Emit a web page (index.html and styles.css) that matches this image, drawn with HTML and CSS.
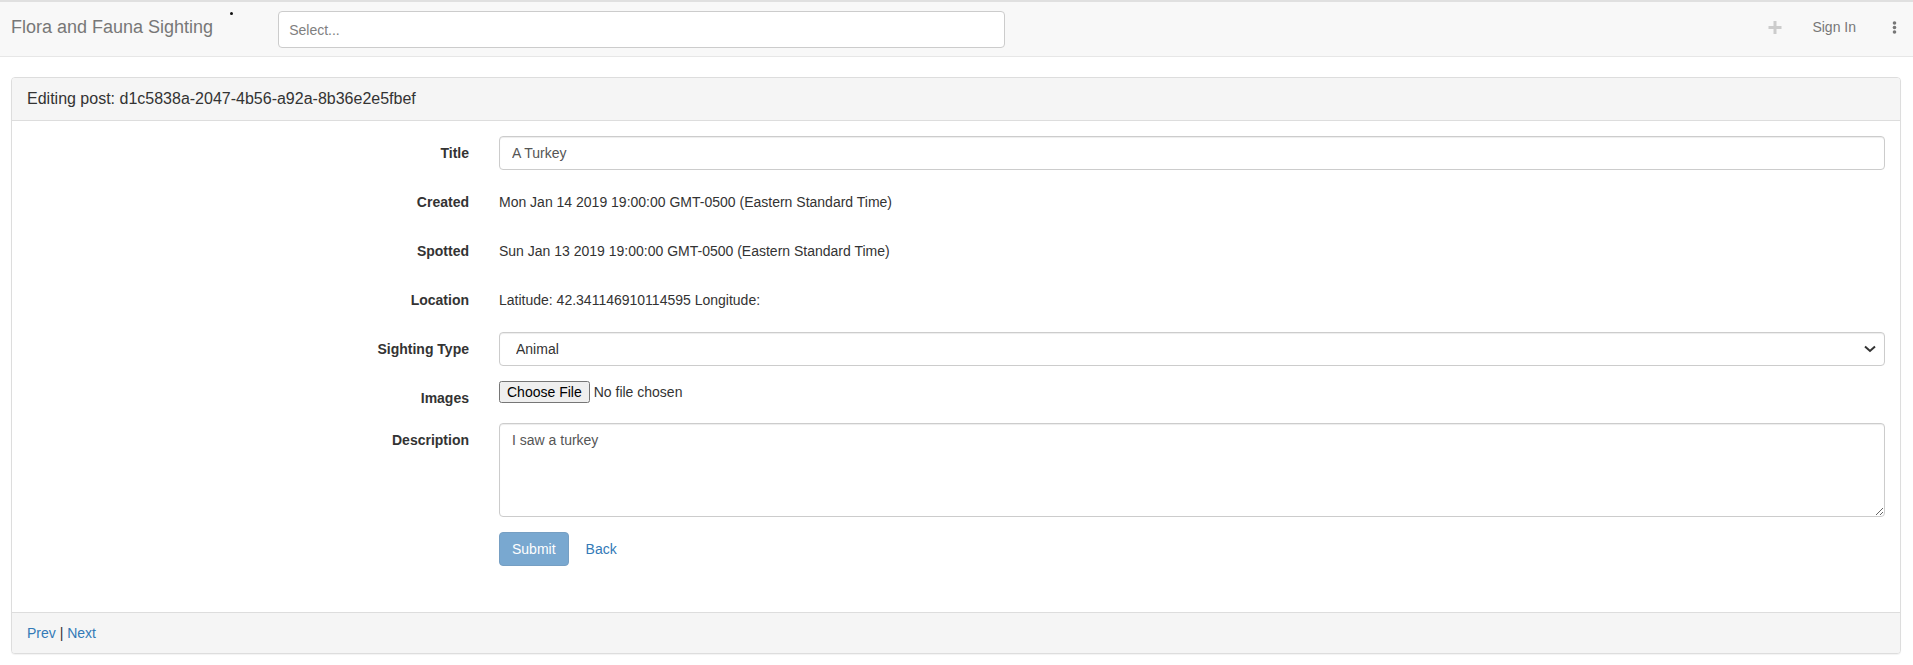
FILE: index.html
```html
<!DOCTYPE html>
<html lang="en">
<head>
<meta charset="utf-8">
<title>Flora and Fauna Sighting</title>
<link rel="stylesheet" href="styles.css">
</head>
<body>
<nav class="navbar">
  <a class="brand" href="#">Flora and Fauna Sighting</a>
  <span class="stray-dot"></span>
  <div class="search">
    <span class="search-placeholder">Select...</span>
  </div>
  <div class="nav-right">
    <svg class="plus" width="14" height="13" viewBox="0 0 14 13"><path d="M7 0V13M0.5 6.5H13.5" stroke="#cccccc" stroke-width="3" fill="none"/></svg>
    <a class="signin" href="#">Sign In</a>
    <svg class="kebab" width="5" height="13" viewBox="0 0 5 13"><circle cx="2.5" cy="2" r="1.8" fill="#777"/><circle cx="2.5" cy="6.5" r="1.8" fill="#777"/><circle cx="2.5" cy="11" r="1.8" fill="#777"/></svg>
  </div>
</nav>

<div class="panel">
  <div class="panel-heading">
    <h3 class="panel-title">Editing post: d1c5838a-2047-4b56-a92a-8b36e2e5fbef</h3>
  </div>
  <div class="panel-body">
    <form class="form">
      <div class="form-row">
        <label class="form-label" for="title">Title</label>
        <div class="form-cell"><input class="form-control" id="title" type="text" value="A Turkey"></div>
      </div>
      <div class="form-row">
        <label class="form-label">Created</label>
        <div class="form-cell"><p class="static">Mon Jan 14 2019 19:00:00 GMT-0500 (Eastern Standard Time)</p></div>
      </div>
      <div class="form-row">
        <label class="form-label">Spotted</label>
        <div class="form-cell"><p class="static">Sun Jan 13 2019 19:00:00 GMT-0500 (Eastern Standard Time)</p></div>
      </div>
      <div class="form-row">
        <label class="form-label">Location</label>
        <div class="form-cell"><p class="static">Latitude: 42.341146910114595 Longitude:</p></div>
      </div>
      <div class="form-row">
        <label class="form-label" for="type">Sighting Type</label>
        <div class="form-cell">
          <div class="select-wrap">
            <select class="form-control select" id="type">
              <option>Animal</option>
              <option>Plant</option>
            </select>
            <svg class="chevron" width="12" height="8" viewBox="0 0 12 8"><path d="M1 1.5L6 6L11 1.5" stroke="#333" stroke-width="2" fill="none"/></svg>
          </div>
        </div>
      </div>
      <div class="form-row">
        <label class="form-label" for="images">Images</label>
        <div class="form-cell"><input class="file" id="images" type="file"></div>
      </div>
      <div class="form-row">
        <label class="form-label" for="desc">Description</label>
        <div class="form-cell"><textarea class="form-control textarea" id="desc">I saw a turkey</textarea></div>
      </div>
      <div class="form-row">
        <span class="form-label"></span>
        <div class="form-cell actions">
          <button class="btn btn-primary" type="button" disabled>Submit</button>
          <a class="btn btn-link" href="#">Back</a>
        </div>
      </div>
    </form>
  </div>
  <div class="panel-footer">
    <a href="#">Prev</a> | <a href="#">Next</a>
  </div>
</div>
</body>
</html>
```

FILE: styles.css
```css
* { box-sizing: border-box; }

html, body {
  margin: 0;
  padding: 0;
  background: #fff;
}

body {
  font-family: "Liberation Sans", Arial, Helvetica, sans-serif;
  font-size: 14px;
  line-height: 20px;
  color: #333;
}

a { color: #337ab7; text-decoration: none; }

/* Navbar */
.navbar {
  display: flex;
  align-items: flex-start;
  height: 57px;
  background: #f8f8f8;
  border-top: 2px solid #e0e0e0;
  border-bottom: 1px solid #e7e7e7;
}

.brand {
  margin-top: 15px;
  padding-left: 11px;
  font-size: 18px;
  line-height: 20px;
  color: #777;
  white-space: nowrap;
}

.stray-dot {
  width: 3px;
  height: 3px;
  margin-top: 10px;
  margin-left: 17px;
  border-radius: 50%;
  background: #111;
  flex: none;
}

.search {
  display: flex;
  align-items: center;
  width: 727px;
  height: 37px;
  margin-top: 9px;
  margin-left: 45px;
  padding: 0 10px;
  background: #fff;
  border: 1px solid #ccc;
  border-radius: 4px;
  flex: none;
}

.search-placeholder {
  color: #808080;
  font-size: 14px;
}

.nav-right {
  display: flex;
  align-items: flex-start;
  margin-left: auto;
  padding-right: 16px;
}

.plus {
  margin-top: 19px;
  display: block;
}

.signin {
  margin-top: 15px;
  margin-left: 30px;
  color: #777;
}

.kebab {
  display: block;
  margin-top: 19px;
  margin-left: 36px;
}

/* Panel */
.panel {
  margin: 20px 12px 20px 11px;
  background: #fff;
  border: 1px solid #ddd;
  border-radius: 4px;
  box-shadow: 0 1px 1px rgba(0, 0, 0, .05);
}

.panel-heading {
  padding: 10px 15px;
  background: #f5f5f5;
  border-bottom: 1px solid #ddd;
  border-radius: 3px 3px 0 0;
}

.panel-title {
  margin: 0;
  font-size: 16px;
  font-weight: normal;
  line-height: 22px;
  color: #333;
}

.panel-body {
  padding: 15px 0 31px;
}

.form-row {
  display: grid;
  grid-template-columns: 25% 75%;
  margin-bottom: 15px;
}

.form-label {
  padding: 7px 15px 0;
  text-align: right;
  font-weight: bold;
}

.form-cell {
  padding: 0 15px;
  min-width: 0;
}

.form-control {
  display: block;
  width: 100%;
  height: 34px;
  padding: 6px 12px;
  font-family: inherit;
  font-size: 14px;
  line-height: 20px;
  color: #555;
  background: #fff;
  border: 1px solid #ccc;
  border-radius: 4px;
  box-shadow: inset 0 1px 1px rgba(0, 0, 0, .075);
  margin: 0;
}

.static {
  margin: 0;
  padding: 7px 0;
  min-height: 34px;
}

.select-wrap {
  position: relative;
}

.select {
  appearance: none;
  -webkit-appearance: none;
  padding-left: 16px;
  color: #333;
}

.chevron {
  position: absolute;
  right: 9px;
  top: 13px;
  pointer-events: none;
}

.file {
  display: block;
  font-family: inherit;
  font-size: 14px;
  color: #333;
  margin: 0;
}

.textarea {
  height: 94px;
  resize: vertical;
}

.actions {
  display: flex;
  align-items: flex-start;
  gap: 4px;
}

.btn {
  display: inline-block;
  padding: 6px 12px;
  font-family: inherit;
  font-size: 14px;
  line-height: 20px;
  border: 1px solid transparent;
  border-radius: 4px;
  height: 34px;
}

.btn-primary {
  color: #fff;
  background: #337ab7;
  border-color: #2e6da4;
  opacity: .65;
}

.btn-link {
  color: #337ab7;
  background: transparent;
}

.panel-footer {
  padding: 10px 15px;
  background: #f5f5f5;
  border-top: 1px solid #ddd;
  border-radius: 0 0 3px 3px;
}
```
